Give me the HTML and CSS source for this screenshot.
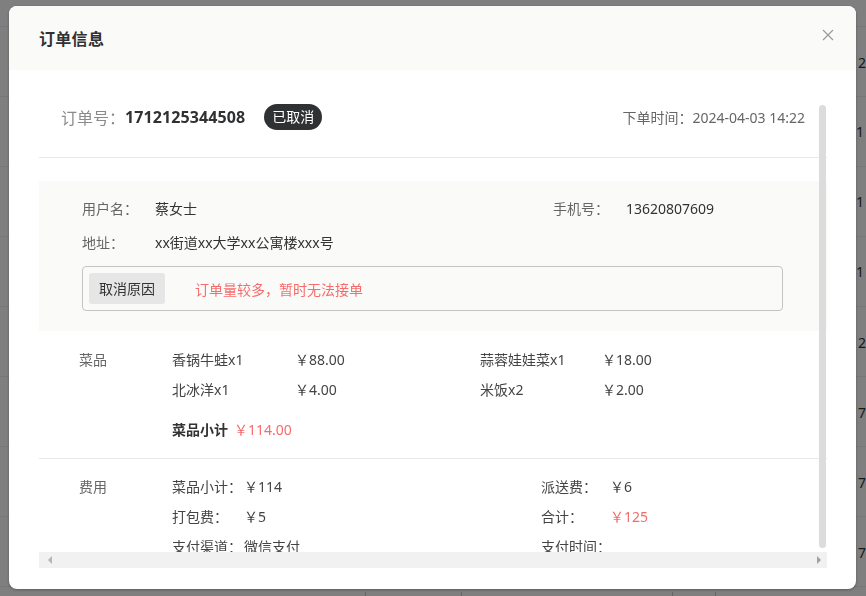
FILE: index.html
```html
<!DOCTYPE html>
<html lang="zh-CN">
<head>
<meta charset="utf-8">
<title>订单信息</title>
<link rel="stylesheet" href="styles.css">
</head>
<body>
<div class="bg-page">
  <div class="bg-table">
    <div class="bg-row"><span class="bg-addr">富楼xxx号</span><span class="bg-amt">服务</span></div>
    <div class="bg-row"><span class="bg-addr">xx街道xx大学xx公寓楼xxx号</span><span class="bg-amt">￥2</span></div>
    <div class="bg-row"><span class="bg-addr">xx街道xx大学xx公寓楼xxx号</span><span class="bg-amt">1</span></div>
    <div class="bg-row"><span class="bg-addr">xx街道xx大学xx公寓楼xxx号</span><span class="bg-amt">1</span></div>
    <div class="bg-row"><span class="bg-addr">xx街道xx大学xx公寓楼xxx号</span><span class="bg-amt">1</span></div>
    <div class="bg-row"><span class="bg-addr">xx街道xx大学xx公寓楼xxx号</span><span class="bg-amt">￥2</span></div>
    <div class="bg-row"><span class="bg-addr">xx街道xx大学xx公寓楼xxx号</span><span class="bg-amt">￥7</span></div>
    <div class="bg-row"><span class="bg-addr">xx街道xx大学xx公寓楼xxx号</span><span class="bg-amt">￥7</span></div>
    <div class="bg-row"><span class="bg-addr">xx街道xx大学xx公寓楼xxx号</span><span class="bg-amt">￥7</span></div>
  </div>
  <div class="bg-pager">
    <span class="pg-total">共 12 条</span>
    <span class="pg-size">10条/页<span class="pg-caret">∨</span></span>
    <span class="pg-btn">&lt;</span>
    <span class="pg-num pg-active">1</span>
    <span class="pg-num">2</span>
    <span class="pg-btn">&gt;</span>
    <span class="pg-jump">前往</span>
    <span class="pg-input">1</span>
    <span class="pg-jump">页</span>
  </div>
</div>

<div class="mask">
  <div class="dialog">
    <div class="dialog-header">
      <h2 class="dialog-title">订单信息</h2>
      <button class="dialog-close" aria-label="关闭">
        <svg width="12" height="12" viewBox="0 0 12 12"><path d="M1 1L11 11M11 1L1 11" stroke="#9a9a9a" stroke-width="1.2" fill="none"/></svg>
      </button>
    </div>
    <div class="dialog-body">
      <div class="viewport">
        <div class="content">
          <div class="order-head">
            <span class="order-label">订单号：</span>
            <span class="order-no">1712125344508</span>
            <span class="badge">已取消</span>
            <span class="order-time">下单时间：2024-04-03 14:22</span>
          </div>

          <div class="user-block">
            <div class="info-row">
              <div class="info-item info-wide"><span class="info-label">用户名：</span><span class="info-value">蔡女士</span></div>
              <div class="info-item"><span class="info-label">手机号：</span><span class="info-value">13620807609</span></div>
            </div>
            <div class="info-row">
              <div class="info-item"><span class="info-label">地址：</span><span class="info-value">xx街道xx大学xx公寓楼xxx号</span></div>
            </div>
            <div class="cancel-box">
              <span class="cancel-label">取消原因</span>
              <span class="cancel-text">订单量较多，暂时无法接单</span>
            </div>
          </div>

          <div class="section dishes">
            <div class="section-label">菜品</div>
            <div class="section-main">
              <div class="dish-grid">
                <span class="txt">香锅牛蛙x1</span><span class="txt">￥88.00</span>
                <span class="txt">蒜蓉娃娃菜x1</span><span class="txt">￥18.00</span>
                <span class="txt">北冰洋x1</span><span class="txt">￥4.00</span>
                <span class="txt">米饭x2</span><span class="txt">￥2.00</span>
              </div>
              <div class="dish-total"><span class="dish-total-label">菜品小计</span><span class="red">￥114.00</span></div>
            </div>
          </div>

          <div class="section fees">
            <div class="section-label">费用</div>
            <div class="fee-grid">
              <span class="txt">菜品小计：</span><span class="txt">￥114</span>
              <span class="txt">派送费：</span><span class="txt">￥6</span>
              <span class="txt">打包费：</span><span class="txt">￥5</span>
              <span class="txt">合计：</span><span class="red">￥125</span>
              <span class="txt">支付渠道：</span><span class="txt">微信支付</span>
              <span class="txt">支付时间：</span><span class="txt"></span>
            </div>
          </div>
        </div>
        <div class="vthumb"></div>
      </div>
      <div class="hbar">
        <span class="arr arr-l"></span>
        <span class="arr arr-r"></span>
      </div>
    </div>
  </div>
</div>
</body>
</html>
```

FILE: styles.css
```css
* { box-sizing: border-box; }
html, body { margin: 0; padding: 0; }
body {
  width: 866px;
  height: 596px;
  overflow: hidden;
  background: #fff;
  font-family: "Noto Sans", "Noto Sans CJK SC", sans-serif;
  font-size: 14px;
  color: #333;
}

/* background page */
.bg-page { width: 866px; }
.bg-table { margin-top: -43px; }
.bg-row {
  height: 70px;
  border-bottom: 1px solid #ebeef5;
  display: flex;
  align-items: center;
  color: #333;
  font-size: 14px;
  white-space: nowrap;
}
.bg-addr { margin-left: 472px; width: 384px; }
.bg-pager {
  display: flex;
  align-items: center;
  height: 30px;
  padding-left: 297px;
  font-size: 15px;
  color: #333;
  white-space: nowrap;
}
.pg-total { width: 68px; }
.pg-size {
  display: flex;
  justify-content: space-between;
  width: 97px;
  padding: 0 8px;
  border-left: 1px solid #ccc;
  border-right: 1px solid #ccc;
}
.pg-caret { color: #999; font-size: 11px; }
.pg-btn { width: 36px; text-align: center; margin-left: 10px; }
.pg-num { width: 36px; text-align: center; }
.pg-active { color: #f90; }
.pg-jump { margin-left: 12px; }
.pg-input {
  width: 44px;
  text-align: center;
  border-left: 1px solid #ccc;
  border-right: 1px solid #ccc;
  margin-left: 4px;
}

/* modal */
.mask {
  position: fixed;
  inset: 0;
  background: rgba(0, 0, 0, 0.5);
}
.dialog {
  margin: 6px 0 0 9px;
  width: 847px;
  height: 583px;
  background: #fff;
  border-radius: 8px;
  overflow: hidden;
  box-shadow: 0 1px 3px rgba(0,0,0,0.3);
}
.dialog-header {
  height: 64px;
  background: #fafaf9;
  display: flex;
  align-items: center;
  padding-left: 30px;
}
.dialog-title {
  margin: 0;
  font-size: 16px;
  font-weight: 700;
  color: #303133;
  letter-spacing: 0.3px;
}
.dialog-close {
  margin-left: auto;
  margin-right: 22px;
  align-self: flex-start;
  margin-top: 23px;
  width: 12px;
  height: 12px;
  padding: 0;
  border: 0;
  background: none;
  display: flex;
}
.dialog-body { padding-top: 30px; }
.viewport {
  position: relative;
  margin-left: 30px;
  width: 788px;
  height: 452px;
  overflow: hidden;
}
.vthumb {
  position: absolute;
  left: 780px;
  top: 5px;
  width: 7px;
  height: 443px;
  border-radius: 4px;
  background: #dcdcdc;
}
.hbar {
  margin-left: 30px;
  width: 788px;
  height: 16px;
  background: #f1f1f1;
  display: flex;
  align-items: center;
  justify-content: space-between;
  padding: 0 6px 0 9px;
}
.arr { width: 0; height: 0; border-top: 4px solid transparent; border-bottom: 4px solid transparent; }
.arr-l { border-right: 4px solid #b4b4b4; }
.arr-r { border-left: 4px solid #a0a0a0; }

/* order head */
.order-head {
  display: flex;
  align-items: center;
  margin-top: 4px;
  height: 54px;
  padding: 0 22px 28px;
  border-bottom: 1px solid #e8e8e8;
  white-space: nowrap;
}
.order-label { font-size: 16px; color: #8a8a8a; }
.order-no { font-size: 16px; font-weight: 700; color: #303133; letter-spacing: 0.1px; }
.badge {
  margin-left: 19px;
  height: 26px;
  line-height: 26px;
  padding: 0 8px;
  border-radius: 13px;
  background: #303133;
  color: #fff;
  font-size: 14px;
}
.order-time { margin-left: auto; color: #666; font-size: 14px; }

/* user block */
.user-block {
  margin-top: 23px;
  background: #fafaf9;
  padding: 18px 44px 20px 43px;
}
.info-row { display: flex; line-height: 20px; white-space: nowrap; }
.info-row + .info-row { margin-top: 14px; }
.info-item { display: flex; }
.info-wide { width: 471px; }
.info-label { width: 73px; color: #666; }
.info-value { color: #333; }
.cancel-box {
  margin-top: 13px;
  border: 1px solid #c4c4c4;
  border-radius: 4px;
  padding: 6px;
  display: flex;
  align-items: center;
}
.cancel-label {
  height: 31px;
  line-height: 31px;
  padding: 0 10px;
  background: #e6e6e6;
  border-radius: 3px;
  color: #333;
}
.cancel-text { margin-left: 30px; color: #f56c6c; }

/* sections */
.section { display: flex; padding-left: 40px; line-height: 20px; white-space: nowrap; }
.section-label { width: 93px; color: #666; }
.dishes { padding-top: 19px; padding-bottom: 18px; border-bottom: 1px solid #e8e8e8; }
.dish-grid {
  display: grid;
  grid-template-columns: 123px 185px 122px auto;
  row-gap: 10px;
}
.txt { color: #444; }
.red { color: #f56c6c; }
.dish-total { margin-top: 20px; display: flex; gap: 6px; }
.dish-total-label { font-weight: 700; color: #333; }
.fees { padding-top: 18px; }
.fee-grid {
  display: grid;
  grid-template-columns: 72px 297px 69px auto;
  row-gap: 10px;
}
```
